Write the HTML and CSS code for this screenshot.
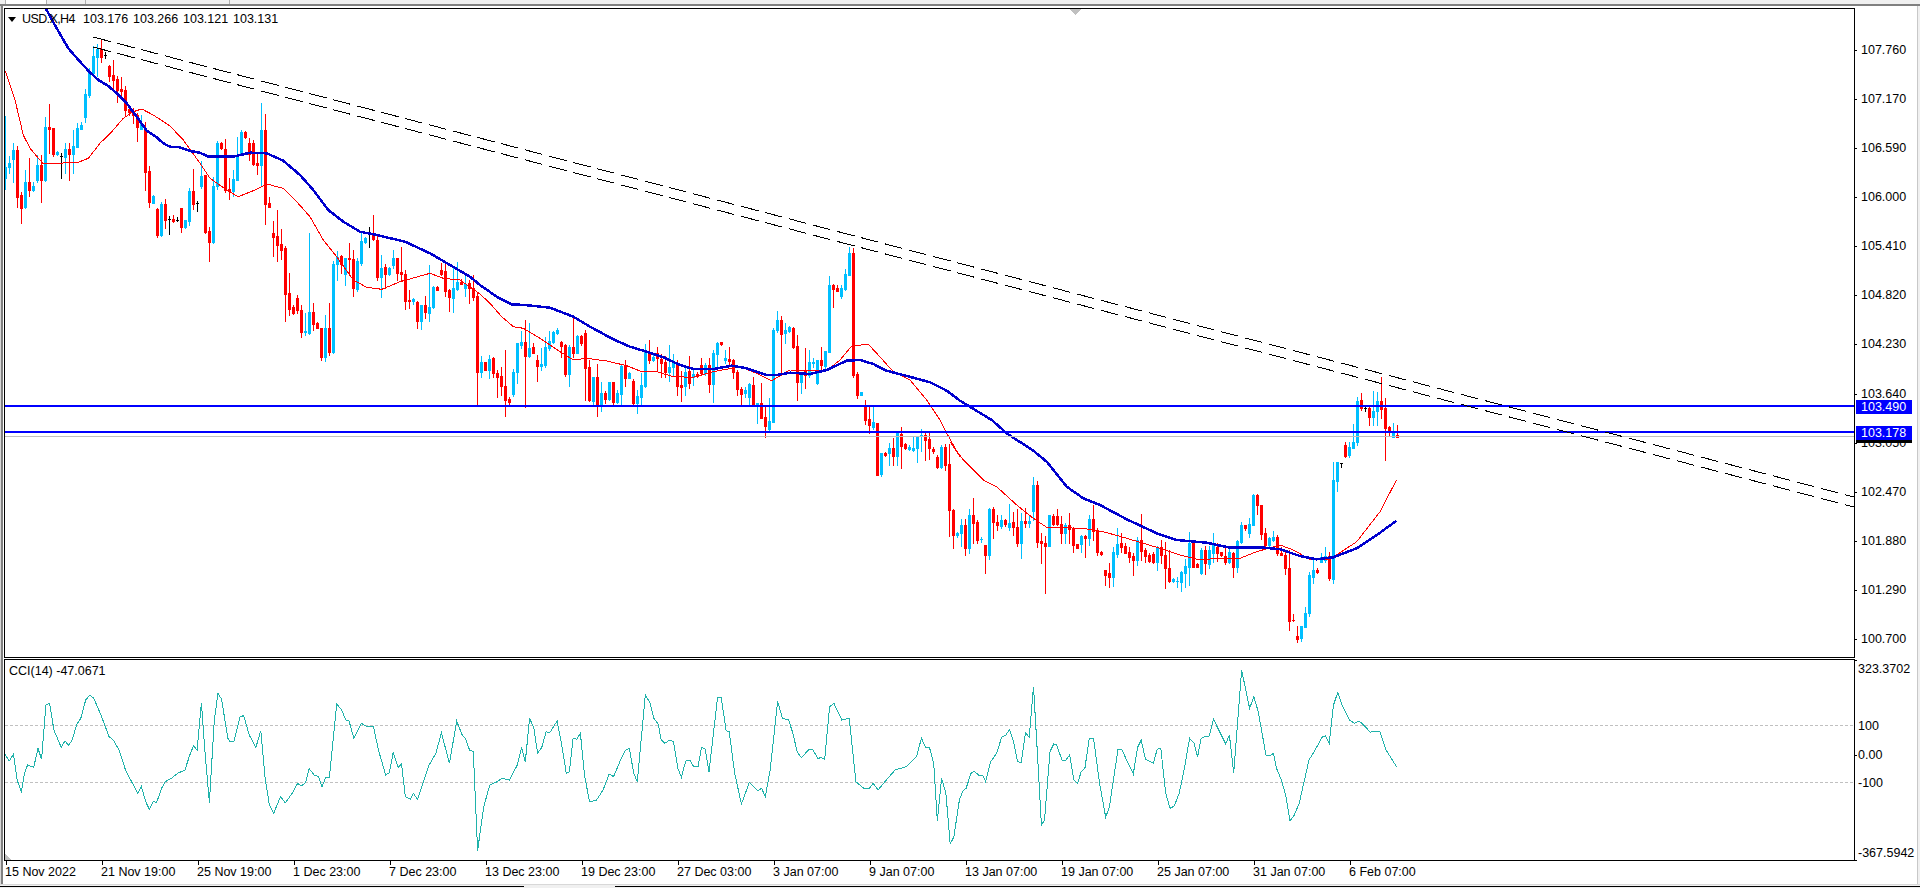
FILE: index.html
```html
<!DOCTYPE html>
<html lang="en">
<head>
<meta charset="utf-8">
<title>USD.X,H4</title>
<link rel="stylesheet" href="styles.css">
</head>
<body>
<div class="app">
  <div class="top-strip">
    <span class="top-tab top-tab-a"></span>
    <span class="top-tab top-tab-b"></span>
    <span class="top-tab top-tab-c"></span>
    <span class="top-tab top-tab-d"></span>
  </div>
  <div class="workspace">
    <div class="left-edge"></div>
    <div class="chart-column">
      <div class="chart-row main-row">
        <div class="pane main-pane">
          <svg id="price-plot" class="plot" viewBox="5 9 1849 648" aria-hidden="true">
            <g id="candles"></g>
            <polyline id="ma-fast" class="ma-fast"></polyline>
            <polyline id="ma-slow" class="ma-slow"></polyline>
            <line class="level-current" x1="5" y1="436.5" x2="1854" y2="436.5"></line>
            <line class="level-blue" x1="5" y1="406" x2="1854" y2="406"></line>
            <line class="level-blue" x1="5" y1="432" x2="1854" y2="432"></line>
            <line class="trend" x1="93" y1="37" x2="1854" y2="497"></line>
            <line class="trend" x1="93" y1="47" x2="1854" y2="507"></line>
            <polygon class="marker" points="1069,9 1081,9 1075,15"></polygon>
          </svg>
          <div class="legend">
            <span class="legend-arrow"></span>
            <span class="legend-symbol">USD.X,H4</span>
            <span class="legend-value">103.176</span>
            <span class="legend-value">103.266</span>
            <span class="legend-value">103.121</span>
            <span class="legend-value">103.131</span>
          </div>
        </div>
        <div class="price-axis">
          <span class="price-tag tag-current"></span>
          <span class="price-label">107.760</span>
          <span class="price-label">107.170</span>
          <span class="price-label">106.590</span>
          <span class="price-label">106.000</span>
          <span class="price-label">105.410</span>
          <span class="price-label">104.820</span>
          <span class="price-label">104.230</span>
          <span class="price-label">103.640</span>
          <span class="price-label">103.050</span>
          <span class="price-label">102.470</span>
          <span class="price-label">101.880</span>
          <span class="price-label">101.290</span>
          <span class="price-label">100.700</span>
          <span class="price-tag tag-upper">103.490</span>
          <span class="price-tag tag-lower">103.178</span>
        </div>
      </div>
      <div class="chart-row sub-row">
        <div class="pane sub-pane">
          <svg id="cci-plot" class="plot" viewBox="5 660 1849 200" aria-hidden="true">
            <line class="level-cci" x1="5" y1="725.5" x2="1854" y2="725.5"></line>
            <line class="level-cci" x1="5" y1="782.5" x2="1854" y2="782.5"></line>
            <polyline id="cci-line" class="cci-line"></polyline>
            <polygon class="marker" points="5,854 11,860 5,860"></polygon>
          </svg>
          <div class="legend sub-legend">CCI(14) -47.0671</div>
        </div>
        <div class="cci-axis">
          <span class="cci-label cci-max">323.3702</span>
          <span class="cci-label cci-100">100</span>
          <span class="cci-label cci-0">0.00</span>
          <span class="cci-label cci-n100">-100</span>
          <span class="cci-label cci-min">-367.5942</span>
        </div>
      </div>
      <div class="time-axis">
        <span class="time-cell">15 Nov 2022</span>
        <span class="time-cell">21 Nov 19:00</span>
        <span class="time-cell">25 Nov 19:00</span>
        <span class="time-cell">1 Dec 23:00</span>
        <span class="time-cell">7 Dec 23:00</span>
        <span class="time-cell">13 Dec 23:00</span>
        <span class="time-cell">19 Dec 23:00</span>
        <span class="time-cell">27 Dec 03:00</span>
        <span class="time-cell">3 Jan 07:00</span>
        <span class="time-cell">9 Jan 07:00</span>
        <span class="time-cell">13 Jan 07:00</span>
        <span class="time-cell">19 Jan 07:00</span>
        <span class="time-cell">25 Jan 07:00</span>
        <span class="time-cell">31 Jan 07:00</span>
        <span class="time-cell">6 Feb 07:00</span>
      </div>
    </div>
    <div class="right-edge"></div>
  </div>
  <div class="tab-strip">
    <span class="tab-line tab-line-a"></span>
    <span class="tab-line tab-line-b"></span>
  </div>
</div>
<script src="chart.js"></script>
</body>
</html>
```
FILE: styles.css
```css
* { box-sizing: border-box; }
html, body { margin: 0; padding: 0; background: #fff; }
body { font: 12.5px/14px "Liberation Sans", Arial, sans-serif; color: #000; overflow: hidden; }

.app { width: 1920px; height: 888px; display: flex; flex-direction: column; overflow: hidden; }

.top-strip { height: 6px; flex: none; display: flex; background: #f0f0f0; border-bottom: 2px solid; border-color: #808080; }
.top-tab { height: 4px; border-right: 1px solid #b0b0b0; }
.top-tab-a { width: 6px; }
.top-tab-b { width: 41px; background: #fff; }
.top-tab-c { width: 39px; }
.top-tab-d { width: 144px; }

.workspace { flex: none; height: 878px; display: flex; padding-top: 2px; }
.left-edge { flex: none; width: 4px; margin-top: -2px; background: #fff; border-left: 1px solid #d8d8d8; box-shadow: inset 2px 0 0 #808080; }
.chart-column { flex: none; width: 1913px; display: flex; flex-direction: column; }
.right-edge { flex: none; width: 3px; margin-top: -2px; background: #f0f0f0; border-left: 1px solid #c8c8c8; }

.chart-row { display: flex; flex: none; }
.main-row { height: 650px; margin-bottom: 1px; }
.sub-row { height: 202px; }

.pane { position: relative; flex: none; width: 1851px; border: 1px solid #000; background: #fff; }
.plot { display: block; width: 1849px; height: 100%; overflow: hidden; shape-rendering: crispEdges; }

.ma-fast { fill: none; stroke: #ff0000; stroke-width: 1; }
.ma-slow { fill: none; stroke: #0000cd; stroke-width: 2.5; }
.level-blue { stroke: #0000ff; stroke-width: 2; }
.level-current { stroke: #c0c0c0; stroke-width: 1; }
.trend { stroke: #000; stroke-width: 1; stroke-dasharray: 18.2 6.6; }
.marker { fill: #c0c0c0; }
.level-cci { stroke: #c0c0c0; stroke-width: 1; stroke-dasharray: 3 2; }
.cci-line { fill: none; stroke: #20b2aa; stroke-width: 1; }

.legend { position: absolute; left: 3px; top: 3px; display: flex; align-items: center; white-space: nowrap; }
.legend-arrow { width: 0; height: 0; border-style: solid; border-width: 5px 4.5px 0; border-color: #000 transparent transparent; margin-right: 6px; }
.legend-symbol { width: 61px; letter-spacing: -0.6px; }
.legend-value { width: 50px; }
.sub-legend { left: 4px; top: 4px; }

.price-axis { position: relative; flex: none; width: 62px; display: grid; grid-auto-rows: 49.08px; padding-top: 35px; align-content: start; }
.price-label { position: relative; padding-left: 6px; height: 14px; line-height: 14px; }
.price-label::before { content: ""; position: absolute; left: 0; top: 7px; width: 2px; height: 1px; background: #000; }
.price-tag { position: absolute; left: 1px; width: 56px; height: 14px; padding-left: 5px; background: #0000ff; color: #fff; line-height: 14px; }
.tag-upper { top: 392px; }
.tag-lower { top: 418px; }
.tag-current { top: 421px; background: #000; }

.cci-axis { position: relative; flex: none; width: 62px; display: flex; flex-direction: column; padding-top: 3px; }
.cci-axis::before, .cci-axis::after { content: ""; position: absolute; left: 0; width: 2px; height: 1px; background: #000; }
.cci-axis::before { top: 1px; }
.cci-axis::after { top: 201px; }
.cci-label { position: relative; display: block; padding-left: 3px; height: 14px; white-space: nowrap; }
.cci-100 { margin-top: 42.5px; }
.cci-0 { margin-top: 15px; }
.cci-n100 { margin-top: 14px; }
.cci-min { margin-top: 56.5px; }
.cci-0::before { content: ""; position: absolute; left: 0; top: 7px; width: 2px; height: 1px; background: #000; }

.time-axis { flex: none; height: 23px; display: flex; padding-left: 1px; }
.time-cell { position: relative; flex: none; width: 96px; padding-top: 4px; margin-left: 0; white-space: nowrap; }
.time-cell::before { content: ""; position: absolute; left: 1px; top: 0; width: 1px; height: 4px; background: #000; }

.tab-strip { flex: none; height: 4px; display: flex; align-items: flex-end; background: #f0f0f0; border-top: 1px solid #d8d8d8; }
.tab-line { height: 2px; border-top: 1px solid #000; }
.tab-line-a { width: 524px; }
.tab-line-b { width: 1305px; margin-left: 91px; }
```
FILE: chart.js
```js
// Bars: colour, high, body top, body bottom, low (pixel rows of the chart)
var BARS = "b116,167,178,189 b156,163,167,173 b143,150,159,182 r146,150,197,207 r192,195,208,223 b170,182,207,208 r158,182,190,196 b182,186,190,191 b155,165,180,182 r155,165,180,202 b117,127,180,181 r104,127,129,153 r128,128,154,156 b151,152,154,155 k153,156,156,178 b143,149,157,173 r143,149,154,180 b130,146,154,173 b123,128,147,147 b122,125,129,129 b89,94,117,122 b68,72,95,97 b46,56,73,74 b44,49,57,76 r40,49,57,62 k52,55,55,58 r65,66,76,81 r60,75,80,90 r76,79,90,102 r77,89,91,97 r86,90,110,115 r106,109,112,115 r108,112,115,123 r113,115,127,141 b115,124,129,129 r122,130,172,190 r166,171,202,207 b195,196,203,203 r208,209,235,237 b202,204,235,236 r199,204,220,228 k216,219,219,234 r215,219,221,222 k217,220,220,221 r208,208,227,232 b220,220,227,228 b188,191,221,225 r169,191,204,209 k201,203,203,211 b161,176,186,188 r175,175,232,233 r227,231,242,261 b177,186,242,243 b141,143,186,189 r142,143,148,149 r139,149,190,192 r178,189,191,199 b170,179,191,196 b137,155,180,180 b130,132,154,155 r131,132,137,138 r138,143,154,160 r140,143,164,165 r153,163,165,174 b103,130,165,185 r114,130,204,224 r197,203,207,207 r221,233,237,256 r210,236,245,261 r229,244,250,259 r246,248,294,321 r273,293,309,315 r305,307,313,314 r295,298,310,313 r305,310,332,337 b313,331,332,335 b233,312,333,334 r303,312,324,330 r322,323,328,328 r328,328,357,360 b315,328,357,361 r303,328,352,355 b261,264,352,353 b251,257,264,280 r255,256,264,273 b258,258,274,285 r243,258,259,273 r250,259,288,296 b258,261,289,291 b233,241,263,265 b237,238,242,243 k227,234,234,247 r215,233,239,240 r235,240,277,280 b255,268,277,297 r264,267,274,288 b267,268,274,275 b250,258,265,268 r258,258,273,280 r247,272,274,281 r270,274,301,309 r290,300,301,308 b298,299,301,304 r301,302,321,328 b305,305,321,329 r296,305,312,318 b265,307,313,321 b286,287,307,308 r286,287,290,290 r263,270,274,275 r262,271,291,296 r289,290,297,311 b268,288,298,312 b262,282,289,290 r279,282,284,284 b275,284,288,296 r280,283,288,303 r275,288,297,300 r293,296,372,405 "
+ "b356,362,372,377 r362,362,370,370 b355,359,370,378 r357,358,373,377 r370,373,377,397 r367,376,386,395 r350,386,400,416 r397,399,402,406 b369,372,394,396 b343,343,372,383 b331,342,345,348 r320,342,356,407 b323,348,356,357 r343,347,353,353 r355,360,366,381 b348,364,366,370 b337,347,365,367 b331,341,348,350 b331,332,342,343 b328,330,333,334 r341,342,346,357 r344,345,374,376 b345,347,374,386 r315,347,353,357 b335,336,353,353 r335,336,343,345 r330,333,368,400 r360,367,400,401 b377,377,401,405 r364,377,406,416 b382,393,406,411 r391,393,399,403 b382,382,399,400 r382,382,402,404 b390,393,402,403 b364,366,394,405 r360,365,378,386 b372,373,378,378 r379,381,403,406 b390,396,403,413 b373,385,397,406 b344,352,386,387 r340,352,360,363 b353,357,360,361 r347,353,358,370 r354,359,363,377 r356,362,372,377 b345,367,372,381 b354,363,367,375 r360,363,386,395 r371,385,387,401 b368,372,386,395 r356,371,383,388 b368,374,377,385 r372,374,376,377 r358,365,373,373 b363,365,373,375 r358,365,384,392 b350,353,384,402 b342,343,354,367 r342,342,344,345 b350,358,360,363 r347,359,361,365 r359,360,372,378 r370,372,389,395 r387,389,394,405 b387,390,393,397 b383,384,397,405 r377,385,405,405 b403,403,406,423 r383,403,418,418 r407,417,426,437 b398,421,429,430 b328,330,422,422 b311,320,330,332 r316,320,334,373 b323,330,333,343 b326,327,331,332 r327,328,347,348 r335,346,382,400 b373,373,382,393 r348,370,375,388 b350,362,375,377 b358,362,363,367 b360,360,383,384 r347,360,365,370 b351,351,366,368 b276,285,352,352 r284,285,289,307 r285,288,291,291 b285,288,296,298 b269,274,289,290 b247,253,275,275 r248,253,375,377 r372,374,395,398 b392,392,395,395 r400,407,420,424 r407,419,425,433 b407,422,427,429 r423,423,475,475 b453,453,474,476 r452,453,455,456 b443,448,453,465 r438,448,456,465 b432,432,456,465 r427,434,446,468 r443,444,448,449 b445,447,449,450 b436,448,450,451 b436,436,448,462 b429,435,436,451 r433,435,440,460 r433,439,448,459 r447,449,451,453 r455,457,467,468 b445,447,467,468 r444,447,465,470 "
+ "r444,464,510,536 r509,510,535,548 b532,533,535,537 b519,525,533,546 r519,525,548,555 b509,515,548,553 r498,515,523,543 r520,522,540,543 b537,539,539,542 r545,545,555,573 b508,509,555,559 r507,509,522,538 r515,522,525,530 b515,520,526,528 r519,520,524,526 b504,523,527,530 r512,522,527,535 r509,527,543,546 b513,521,543,558 r508,521,523,527 b516,521,523,527 b477,485,511,520 r481,485,542,547 r533,541,543,563 r536,543,546,593 b515,515,546,546 r514,516,524,525 r509,516,524,525 r516,524,533,543 b523,525,533,543 r513,525,529,543 r527,528,545,552 r544,544,548,548 b535,536,544,552 r535,536,538,557 b515,519,538,545 r505,519,531,540 r528,531,552,555 r551,552,554,555 r570,570,575,585 r563,573,577,587 b547,552,577,586 b528,544,554,557 r533,543,547,552 r543,546,553,553 r547,552,557,562 r553,556,560,575 b537,540,560,565 r514,540,551,560 r548,550,556,562 r553,555,561,562 r552,554,562,563 b546,548,562,570 r540,547,555,563 r542,555,568,588 r550,568,581,582 b578,579,581,582 b577,581,581,587 b571,572,582,591 b559,566,573,587 b532,543,567,585 r542,543,567,567 r563,564,567,567 b548,550,573,574 r546,550,563,574 b546,550,564,568 b533,545,553,562 r543,547,553,561 r552,552,555,556 r545,556,562,564 b548,552,562,563 r552,553,567,577 b540,541,567,572 b522,525,542,543 r525,525,528,530 b518,524,533,537 b494,495,525,525 r494,495,505,514 r505,505,534,539 r528,533,545,548 b537,538,545,546 b531,537,540,541 r535,537,553,555 r547,553,555,555 r550,555,568,574 r550,568,621,630 r614,620,620,621 r626,636,639,642 b626,626,638,641 b607,613,627,627 b572,575,613,616 b560,570,577,583 r568,570,572,573 b553,557,562,562 b547,556,560,562 r552,556,578,580 b462,480,579,583 b462,462,481,491 k463,463,463,467 r442,445,456,457 b442,447,455,457 b424,442,448,448 b397,401,442,445 r393,400,408,410 k406,408,408,411 r405,408,417,425 b391,411,417,425 b392,401,411,425 r377,401,409,418 r398,408,428,460 r426,427,431,435 b423,431,437,437 r425,435,437,437";

var COLOURS = { b: "#00bfff", r: "#ff0000", k: "#000000" };

// Traced curves, in stretches of [x, y] pairs with the origin and scale of each stretch.
function stretch(x0, y0, sx, sy, flat) {
  var out = [];
  for (var i = 0; i < flat.length; i += 2) {
    out.push((x0 + flat[i] * sx).toFixed(1) + "," + (y0 + flat[i + 1] * sy).toFixed(1));
  }
  return out;
}
var T = 1 / 3;

var MA_SLOW = [].concat(
  stretch(0, 0, T, T, [137,25,170,85,205,145,240,185,268,215,295,240,325,258,350,280,380,310,410,350,440,392,470,412,490,430,510,440,540,442,570,453,600,458,625,470,650,470,700,470,750,458,800,460,850,482,900,525,940,570,985,630,1030,665,1080,695,1130,705,1215,725,1290,760,1350,795,1410,830]),
  stretch(480, 200, T, T, [0,255,50,290,95,313,135,315,210,323,280,350,330,380,400,418,450,440,500,455,550,472,600,495,640,507,700,507,755,497,800,505,860,525,890,525,930,518,990,522,1040,510,1100,482,1140,480,1180,492,1220,512,1300,533,1350,547,1400,572,1440,602]),
  stretch(900, 420, T, T, [275,0,320,40,400,92,440,125,500,200,550,235,600,255,680,298,770,340,830,360,920,368,990,383,1080,382,1140,388,1200,408,1250,418,1300,412,1370,385,1440,338]),
  ["1396.5,520.7"]
);

var MA_FAST = [].concat(
  stretch(0, 0, T, T, [16,213,45,300,70,405,90,445,130,492,170,490,235,487,265,475,300,430,335,395,370,355,400,335,425,327,460,345,510,378,550,420,600,490,630,535,680,570,715,590,760,572,800,552,850,565,890,605,930,650,970,720,1010,770,1060,840,1100,862,1145,868,1200,845,1290,820,1330,835,1380,840]),
  stretch(480, 200, T, T, [0,282,30,310,65,350,100,380,130,385,180,415,240,455,280,480,320,475,380,483,440,497,480,513,530,515,580,530,640,532,700,515,780,500,830,520,875,542,930,510,1000,512,1040,512,1080,480,1115,438,1165,433,1190,460,1240,515,1290,540,1340,600,1380,660,1400,700,1440,770]),
  stretch(900, 420, T, T, [150,65,190,120,250,180,290,200,350,255,400,295,440,322,550,325,610,335,680,355,770,382,840,405,900,420,950,415,1020,415,1070,395,1140,375,1180,390,1230,418,1290,418,1370,365,1440,275]),
  ["1396.5,480"]
);

var CCI = [].concat(
  stretch(0, 660, 960 / 1568, T, [8,282,15,303,22,283,28,360,35,395,40,340,45,315,55,322,62,265,68,298,75,135,81,130,88,210,100,262,106,243,112,256,118,240,125,195,132,175,140,120,147,105,153,115,165,165,178,230,185,240,195,272,205,330,215,365,225,400,231,380,238,425,244,448,250,425,256,427,264,385,270,365,280,355,290,340,302,330,310,285,316,258,322,270,329,128,335,280,342,428,350,180,356,100,362,118,372,235,376,246,382,244,392,170,398,167,407,225,418,262,426,212,433,355,440,435,447,460,458,410,466,428,478,398,486,370,492,378,499,368,505,326,513,345,520,350,526,380,532,352,538,352,550,132,558,150,565,180,570,183,578,235,590,190,598,198,610,200,618,270,630,345,636,338,642,278,650,322,656,312,662,410,670,418,675,400,682,418,700,318,712,280,721,218,734,310,746,184,755,225,760,235,767,270,773,275,780,572,790,440,800,375,812,365,820,355,832,360,845,315,852,262,858,305,865,175,872,205,878,280,885,262,892,215,898,218,910,183,917,250,925,340,930,335,936,235,942,238,948,220,955,350,963,425,974,421,985,390,995,342,1002,350,1016,290,1022,270,1028,265,1035,340,1041,365,1054,105,1062,130,1068,175,1075,192,1080,240,1086,250,1094,240,1100,245,1107,325,1113,352,1120,303,1127,300,1133,320,1140,320,1146,262,1152,268,1158,335,1172,112,1178,112,1186,212,1191,215,1200,340,1211,432,1224,367,1238,392,1244,385,1250,410,1258,330,1270,124,1278,175,1288,180,1295,220,1302,275,1309,293,1322,267,1328,270,1336,297,1340,292,1347,298,1355,140,1362,130,1375,180,1387,175,1398,365,1412,387,1420,385,1426,370,1434,390,1450,355,1462,330,1480,320,1497,290,1505,235,1512,262,1518,262,1525,310,1531,482,1538,355,1545,400,1552,552,1558,530,1567,420]),
  stretch(960, 660, 960 / 1568, T, [0,415,5,392,10,385,18,340,23,333,30,345,37,345,42,365,50,305,60,280,68,232,75,225,81,208,88,250,94,305,100,307,107,218,113,232,120,80,127,300,133,495,138,480,147,275,153,252,158,255,167,302,173,300,179,285,186,360,192,370,198,335,204,325,211,235,218,235,228,370,238,472,244,440,258,268,264,268,283,342,290,262,296,240,303,298,316,310,322,268,328,265,336,400,343,445,350,438,358,400,366,330,375,235,382,248,388,290,394,235,400,230,407,228,414,178,434,252,440,225,447,340,460,30,473,145,480,110,487,155,500,287,506,288,512,280,517,325,525,360,532,405,539,482,546,465,554,430,562,365,570,300,580,270,592,230,597,228,603,250,610,135,617,97,625,140,636,180,644,190,652,183,662,200,670,217,678,213,686,215,696,270,713,320])
);

var SVG_NS = "http://www.w3.org/2000/svg";

function drawCandles() {
  var paths = { b: "", r: "", k: "" };
  BARS.split(" ").forEach(function (bar, i) {
    var key = bar.charAt(0);
    var v = bar.slice(1).split(",").map(Number);
    var left = 4 + i * 4;
    paths[key] += "M" + (left + 1) + " " + v[0] + "h1V" + (v[3] + 1) + "h-1z";
    paths[key] += "M" + left + " " + v[1] + "h3V" + (v[2] + 1) + "h-3z";
  });
  var group = document.getElementById("candles");
  Object.keys(paths).forEach(function (key) {
    var p = document.createElementNS(SVG_NS, "path");
    p.setAttribute("d", paths[key]);
    p.setAttribute("fill", COLOURS[key]);
    group.appendChild(p);
  });
}

drawCandles();
document.getElementById("ma-slow").setAttribute("points", MA_SLOW.join(" "));
document.getElementById("ma-fast").setAttribute("points", MA_FAST.join(" "));
document.getElementById("cci-line").setAttribute("points", CCI.join(" "));
```
